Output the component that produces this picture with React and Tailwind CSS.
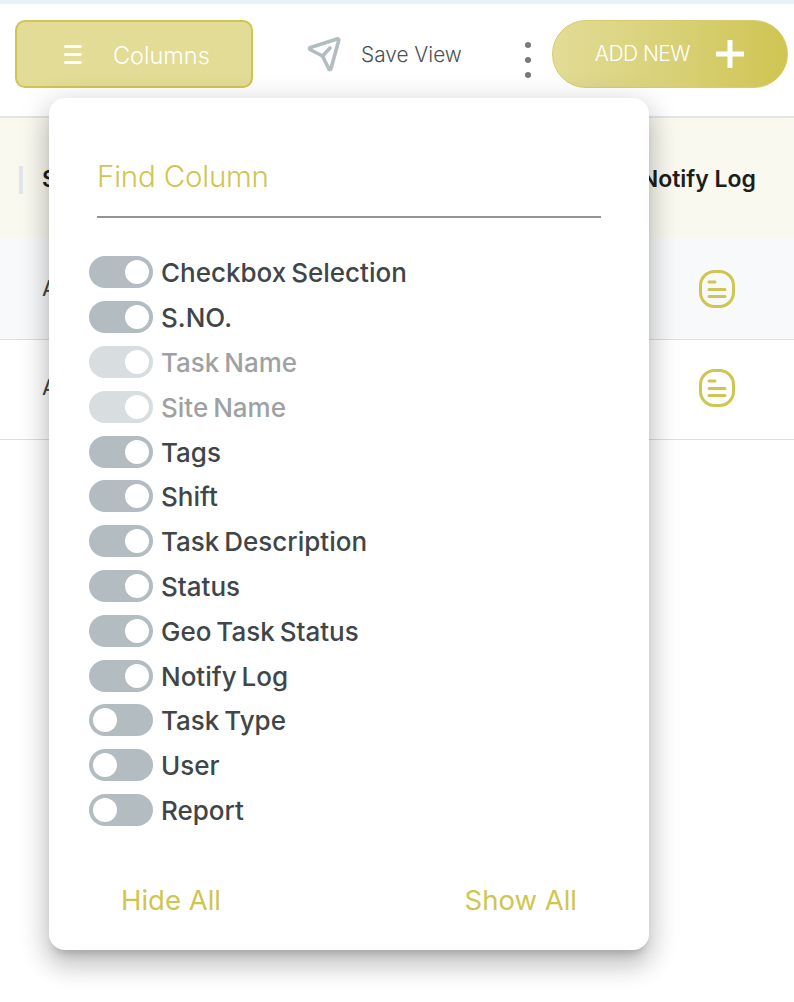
const font = { fontFamily: "Inter, sans-serif" };

const columns = [
  { name: "Checkbox Selection", on: true },
  { name: "S.NO.", on: true },
  { name: "Task Name", on: true, locked: true },
  { name: "Site Name", on: true, locked: true },
  { name: "Tags", on: true },
  { name: "Shift", on: true },
  { name: "Task Description", on: true },
  { name: "Status", on: true },
  { name: "Geo Task Status", on: true },
  { name: "Notify Log", on: true },
  { name: "Task Type", on: false },
  { name: "User", on: false },
  { name: "Report", on: false },
];

export default function App() {
  return (
    <div className="relative h-[1002px] w-[794px] overflow-hidden bg-white" style={font}>
      <div className="h-1 bg-[#e8f0fa]" />

      {/* Toolbar */}
      <div className="flex h-[114px] items-start border-b-2 border-[#e3e4e8] pl-[15px] pt-4">
        <button className="flex h-[68px] w-[238px] items-center rounded-[10px] border-2 border-[#cfc552] bg-[#e2dc96] pl-[47px] text-[23.5px] font-light text-white">
          <span className="flex w-[18px] flex-col gap-[5px]">
            <span className="h-[3px] rounded-sm bg-white" />
            <span className="h-[3px] rounded-sm bg-white" />
            <span className="h-[3px] rounded-sm bg-white" />
          </span>
          <span className="ml-[31px] mt-[3px]">Columns</span>
        </button>

        <div className="ml-[54px] flex h-[68px] items-center">
          <SendIcon />
          <span className="ml-[20px] mt-[2px] text-[20.8px] font-light text-[#4a5054]">Save View</span>
        </div>

        <div className="ml-[63px] mt-[6px] flex h-[68px] flex-col items-center justify-center gap-[9px]">
          <span className="h-[6px] w-[6px] rounded-full bg-[#77797b]" />
          <span className="h-[6px] w-[6px] rounded-full bg-[#77797b]" />
          <span className="h-[6px] w-[6px] rounded-full bg-[#77797b]" />
        </div>

        <button className="ml-[21px] flex h-[68px] w-[236px] items-center rounded-full border border-[#d6ce6e] bg-gradient-to-r from-[#e2dc96] to-[#cfc552] pl-[42px] text-[21px] font-light tracking-tight text-white">
          <span>ADD NEW</span>
          <svg className="ml-[26px]" width="28" height="28" viewBox="0 0 28 28" fill="none" stroke="white" strokeWidth="5">
            <path d="M14 0v28M0 14h28" />
          </svg>
        </button>
      </div>

      {/* Table behind the popup */}
      <div className="flex h-[120px] items-center justify-between bg-[#f9f9f0] pl-[19px] pr-[38px] pt-[3px] text-[23px] font-semibold text-[#1d1d1b]">
        <div className="flex items-center">
          <span className="h-7 w-1 bg-[#e2e6ec]" />
          <span className="ml-[19px]">S.NO.</span>
        </div>
        <span>Notify Log</span>
      </div>
      <Row className="h-[102px] bg-[#f8f9fb]" />
      <Row className="h-[100px] bg-white pb-[4px]" />

      {/* Column picker */}
      <div className="absolute left-[49px] top-[98px] flex h-[852px] w-[600px] flex-col rounded-2xl bg-white px-10 shadow-[0_8px_10px_-5px_rgba(0,0,0,0.2),0_16px_24px_2px_rgba(0,0,0,0.14),0_6px_30px_5px_rgba(0,0,0,0.12)]">
        <div className="ml-2 mr-2 mt-[50px] h-[70px] border-b-2 border-[#949494] text-[29.5px] font-light leading-[56px] tracking-[-0.2px] text-[#cfc552]">
          Find Column
        </div>
        <div className="mt-[32px] flex flex-col">
          {columns.map((c) => (
            <ColumnToggle key={c.name} {...c} />
          ))}
        </div>
        <div className="mt-[48px] flex justify-between pl-[32px] pr-[32px] text-[27.5px] font-normal text-[#cfc552]">
          <span>Hide All</span>
          <span>Show All</span>
        </div>
      </div>
    </div>
  );
}

function Row({ className }) {
  return (
    <div className={`flex items-center justify-between border-b border-[#dedede] pl-[42px] pr-[59px] text-[22px] text-[#3f4447] ${className}`}>
      <span>A</span>
      <LogIcon />
    </div>
  );
}

function ColumnToggle({ name, on, locked }) {
  return (
    <div className={`flex h-[44.8px] items-center ${locked ? "opacity-50" : ""}`}>
      <span className={`flex h-8 w-16 items-center rounded-full bg-[#b2bcc1] px-1 ${on ? "justify-end" : "justify-start"}`}>
        <span className="h-6 w-6 rounded-full bg-white" />
      </span>
      <span className="ml-2 mt-[1px] text-[26px] font-medium text-[#3f4648] [word-spacing:-2px]">{name}</span>
    </div>
  );
}

function SendIcon() {
  return (
    <svg width="34" height="36" viewBox="0 0 34 36" fill="none" stroke="#b2bcc1" strokeWidth="3.6" strokeLinejoin="round" strokeLinecap="round">
      <path d="M3 13.5C2 12.5 2.500 11.800 3.500 11.500L30 3C31.500 2.600 32 3.500 31.700 4.500L24 32.500C23.500 34 22.500 34 21.800 32.800L15.500 20Z" />
      <path d="M15.500 20 23 12" />
    </svg>
  );
}

function LogIcon() {
  return (
    <svg width="36" height="38" viewBox="0 0 36 38" fill="none" stroke="#cfc552" strokeLinecap="round">
      <rect x="1.5" y="1.5" width="33" height="35" rx="14" strokeWidth="3" />
      <path d="M10 12h6M10 19.500h16M10 26.500h16" strokeWidth="3" />
    </svg>
  );
}
